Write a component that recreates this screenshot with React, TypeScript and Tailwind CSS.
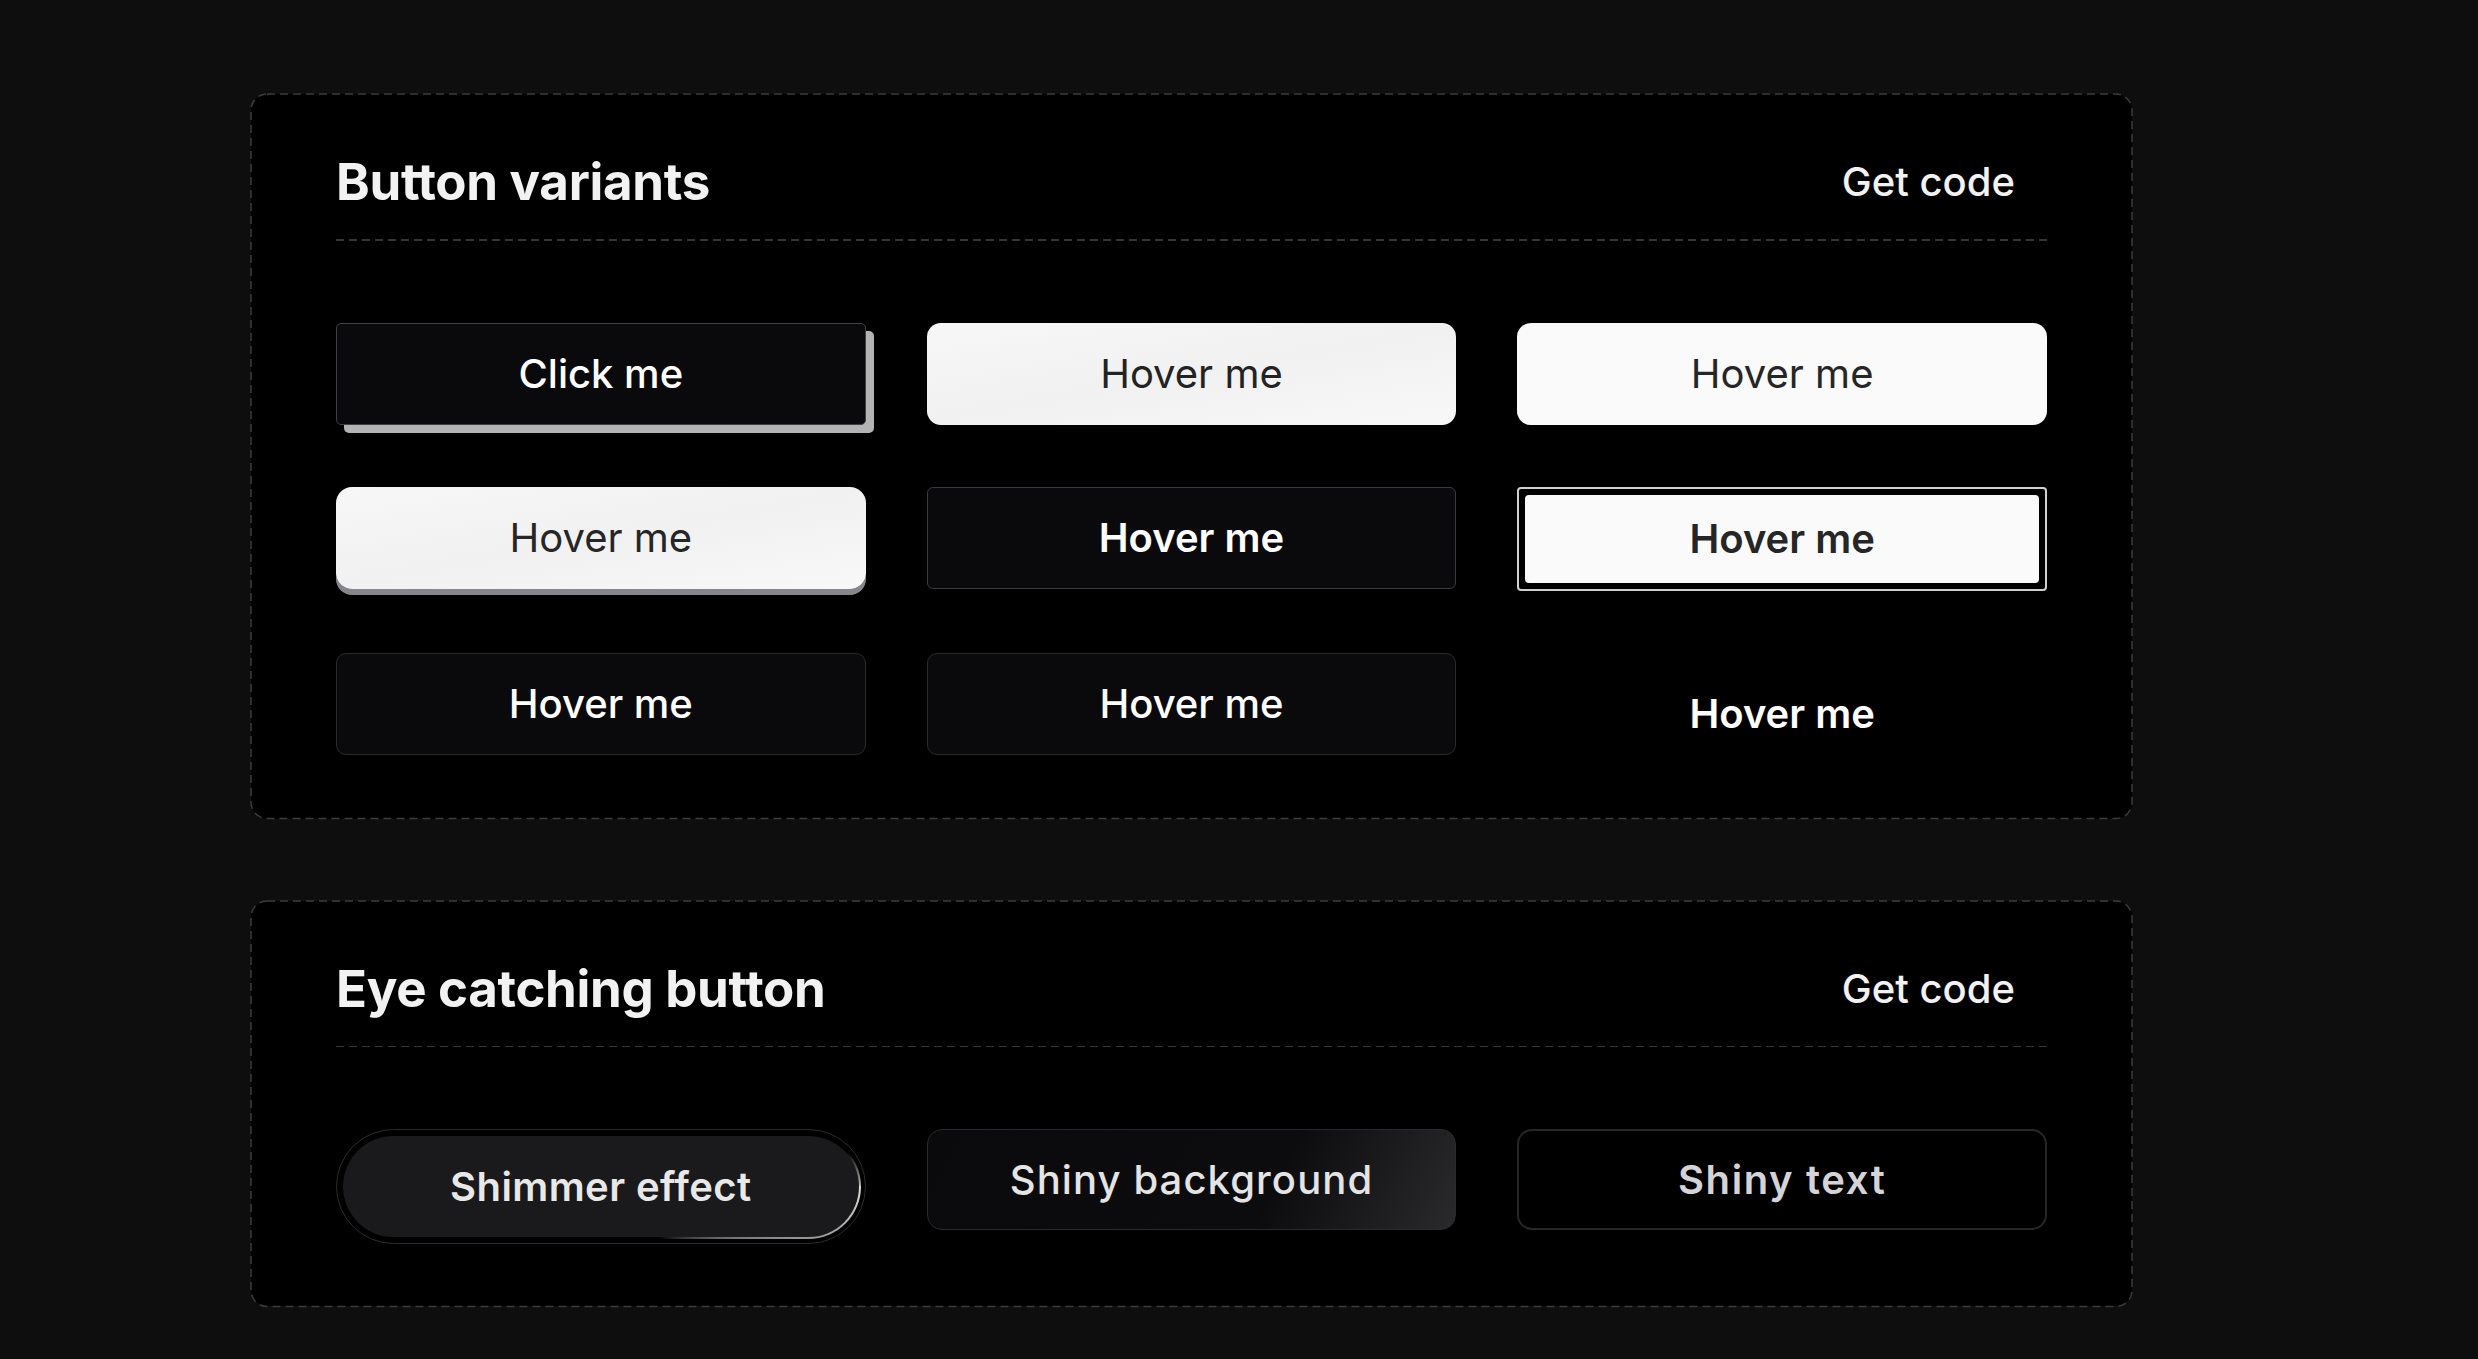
function DashedFrame() {
  return (
    <svg className="pointer-events-none absolute inset-0 h-full w-full overflow-visible" aria-hidden="true">
      <rect
        x="0"
        y="0"
        width="100%"
        height="100%"
        rx="16"
        ry="16"
        fill="none"
        stroke="#3c3c3c"
        strokeWidth="1.5"
        strokeDasharray="8 5"
      />
    </svg>
  );
}

function Header({ title }: { title: string }) {
  return (
    <>
      <div className="flex h-[58px] items-center justify-between">
        <h2 className="text-[51px] leading-[58px] font-bold tracking-[-0.3px] text-[#f2f2f2]">{title}</h2>
        <button className="mr-[32px] text-[40px] font-medium text-[#f2f2f2]">Get code</button>
      </div>
      <div className="mt-[28px] h-[1.5px] bg-[repeating-linear-gradient(90deg,#363636_0_8px,transparent_8px_13px)]" />
    </>
  );
}

export default function App() {
  return (
    <div className="min-h-screen bg-[#0e0e0e] pt-[94px] pb-[54px] pl-[251px] font-['Inter','Noto_Sans',sans-serif]">
      <div className="flex w-[1881px] flex-col gap-[82px]">
        <section className="relative rounded-[16px] bg-black px-[85px] pt-[59px] pb-[64px]">
          <DashedFrame />
          <Header title="Button variants" />
          <div className="mt-[82px] grid grid-cols-3 gap-x-[61px] gap-y-[62px]">
            <button className="h-[102px] rounded-[5px] border border-[#3f3f46] bg-[#0a0a0c] text-[40px] font-medium text-white shadow-[8px_8px_0_#b3b3b3]">
              Click me
            </button>
            <button className="h-[102px] rounded-[14px] bg-[linear-gradient(170deg,#f7f7f7,#f1f1f1_50%,#f8f8f8)] text-[40px] text-[#232323]">
              Hover me
            </button>
            <button className="h-[102px] rounded-[14px] bg-[#fafafa] text-[40px] text-[#262626]">
              Hover me
            </button>
            <button className="h-[102px] rounded-[16px] bg-[linear-gradient(170deg,#f7f7f7,#f1f1f1_50%,#f8f8f8)] text-[40px] text-[#262626] shadow-[0_6px_0_#86868c]">
              Hover me
            </button>
            <button className="h-[102px] rounded-[6px] border border-[#3a3a3e] bg-[#0a0a0c] text-[40px] font-semibold text-white">
              Hover me
            </button>
            <button className="h-[104px] rounded-[4px] border-2 border-[#d0d0d0] bg-black p-[6px]">
              <span className="flex h-full items-center justify-center rounded-[4px] bg-[#fafafa] text-[40px] font-semibold text-[#262626]">
                Hover me
              </span>
            </button>
            <button className="h-[102px] rounded-[10px] border border-[#2a2a2c] bg-[#0a0a0c] text-[40px] font-medium text-white">
              Hover me
            </button>
            <button className="h-[102px] rounded-[10px] border border-[#2a2a2c] bg-[#0a0a0c] text-[40px] font-medium text-white">
              Hover me
            </button>
            <button className="h-[102px] pt-[20px] text-[40px] font-semibold text-white">
              Hover me
            </button>
          </div>
        </section>

        <section className="relative rounded-[16px] bg-black px-[85px] pt-[59px] pb-[62px]">
          <DashedFrame />
          <Header title="Eye catching button" />
          <div className="mt-[82px] grid grid-cols-3 items-start gap-x-[61px]">
            <button className="h-[115px] rounded-full border border-[#2c2c2e] bg-black p-[4px]">
              <span className="block h-full rounded-full bg-[conic-gradient(from_90deg,#dcdcdc_0deg,#7a7a7a_20deg,transparent_42deg,transparent_352deg,#bcbcbc_360deg)] p-[2px]">
                <span className="flex h-full items-center justify-center rounded-full bg-[#1a1a1c] text-[40px] font-semibold tracking-[0.4px] text-[#e8e8e8]">
                  Shimmer effect
                </span>
              </span>
            </button>
            <button className="h-[101px] rounded-[15px] border border-[#2a2a2c] bg-[linear-gradient(115deg,#0a0a0c_0%,#0c0c0e_65%,#2a2a2d_100%)] text-[40px] font-medium tracking-[1.1px] text-[#e4e4e4]">
              Shiny background
            </button>
            <button className="h-[101px] rounded-[15px] border-2 border-[#262628] bg-black text-[40px] font-semibold tracking-[1.6px] text-[#d4d4d8]">
              Shiny text
            </button>
          </div>
        </section>
      </div>
    </div>
  );
}
